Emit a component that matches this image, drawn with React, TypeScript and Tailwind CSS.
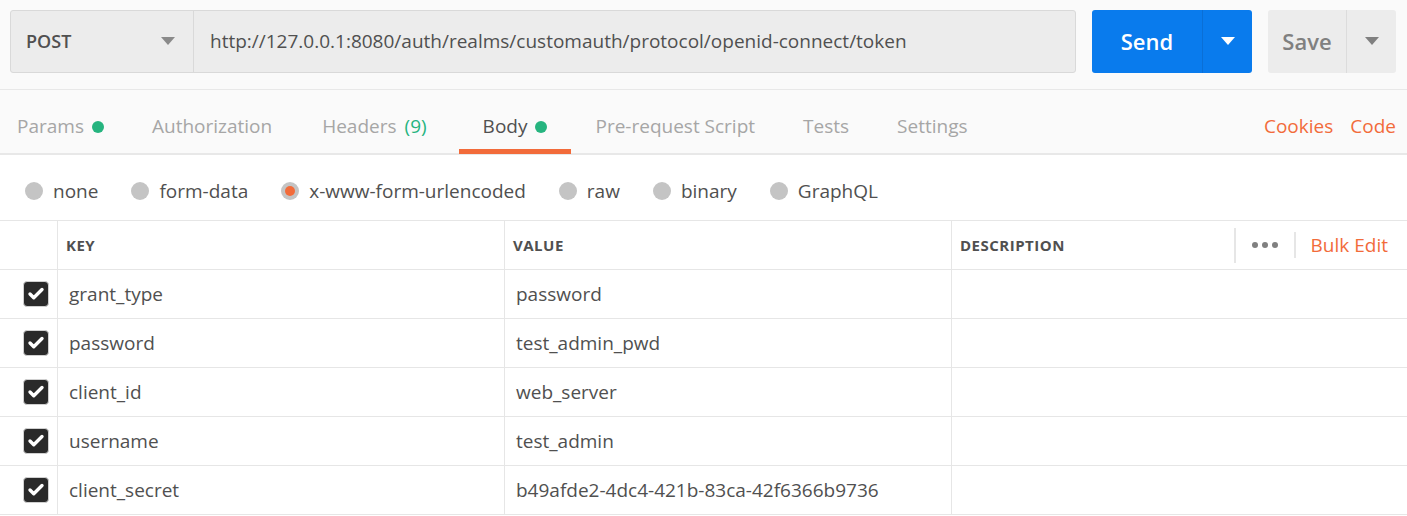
import { Check } from 'lucide-react'

const font = { fontFamily: '"Open Sans", "Noto Sans", sans-serif' }

const tabs: { label: string; dot?: boolean; count?: string; active?: boolean }[] = [
  { label: 'Params', dot: true },
  { label: 'Authorization' },
  { label: 'Headers', count: '(9)' },
  { label: 'Body', dot: true, active: true },
  { label: 'Pre-request Script' },
  { label: 'Tests' },
  { label: 'Settings' },
]

const bodyTypes = ['none', 'form-data', 'x-www-form-urlencoded', 'raw', 'binary', 'GraphQL']

const rows = [
  { key: 'grant_type', value: 'password' },
  { key: 'password', value: 'test_admin_pwd' },
  { key: 'client_id', value: 'web_server' },
  { key: 'username', value: 'test_admin' },
  { key: 'client_secret', value: 'b49afde2-4dc4-421b-83ca-42f6366b9736' },
]

function Caret({ className }: { className: string }) {
  return (
    <svg width="14" height="8" viewBox="0 0 14 8" className={className}>
      <path d="M0 0 L14 0 L7 8 Z" fill="currentColor" />
    </svg>
  )
}

export default function App() {
  return (
    <div className="w-[1407px] h-[516px] overflow-hidden bg-white text-[#505050]" style={font}>
      <div className="bg-[#fafafa]">
        <div className="flex items-center h-[90px] pl-[10px] pr-[11px] pb-[17px] pt-[10px] border-b border-[#e8e8e8]">
          <div className="flex flex-1 h-[63px] rounded-[3px] border border-[#d9d9d9] bg-[#ececec]">
            <div className="flex items-center justify-between w-[183px] pl-[15px] pr-[18px] border-r border-[#d9d9d9]">
              <span className="text-[18px] font-semibold text-[#505050]">POST</span>
              <Caret className="text-[#8a8a8a]" />
            </div>
            <div className="flex items-center pl-[16px] text-[19px] text-[#505050]">
              http://127.0.0.1:8080/auth/realms/customauth/protocol/openid-connect/token
            </div>
          </div>
          <div className="flex ml-[16px] h-[63px] w-[160px] rounded-[3px] bg-[#097bed] text-white">
            <div className="flex items-center justify-center w-[111px] border-r border-[#0a6fd6] text-[22px] font-semibold">
              Send
            </div>
            <div className="flex flex-1 items-center justify-center">
              <Caret className="text-white" />
            </div>
          </div>
          <div className="flex ml-[16px] h-[63px] w-[128px] rounded-[3px] bg-[#ececec] text-[#808080]">
            <div className="flex items-center justify-center w-[79px] border-r border-[#dcdcdc] text-[22px] font-semibold">
              Save
            </div>
            <div className="flex flex-1 items-center justify-center">
              <Caret className="text-[#808080]" />
            </div>
          </div>
        </div>

        <div className="flex items-stretch h-[65px] border-b-2 border-[#e8e8e8] pl-[17px] pr-[11px]">
          {tabs.map((t, i) => (
            <div
              key={t.label}
              className={`relative flex items-center pt-[10px] text-[19px] ${
                i === 0 ? 'pr-6' : t.count ? 'pl-[26px] pr-[32px]' : 'px-6'
              } ${t.active ? 'text-[#505050]' : 'text-[#a6a6a6]'}`}
            >
              {t.label}
              {t.count && <span className="ml-[8px] text-[#26b47f]">{t.count}</span>}
              {t.dot && <span className="ml-[8px] w-[12px] h-[12px] rounded-full bg-[#26b47f]" />}
              {t.active && <span className="absolute left-0 right-0 bottom-[-1px] h-[5px] bg-[#f26b3a]" />}
            </div>
          ))}
          <div className="flex flex-1 items-center justify-end gap-[17px] pt-[10px] text-[19px] text-[#f26b3a]">
            <span>Cookies</span>
            <span>Code</span>
          </div>
        </div>
      </div>

      <div className="flex items-center h-[65px] pt-[7px] pl-[25px] gap-[33px] text-[19px] text-[#505050]">
        {bodyTypes.map((b) => (
          <div key={b} className="flex items-center gap-[10px]">
            <span className="flex items-center justify-center w-[18px] h-[18px] rounded-full bg-[#c4c4c4]">
              {b === 'x-www-form-urlencoded' && <span className="w-[10px] h-[10px] rounded-full bg-[#f26b3a]" />}
            </span>
            <span>{b}</span>
          </div>
        ))}
      </div>

      <div className="border-t border-[#e6e6e6]">
        <div className="grid grid-cols-[58px_447px_447px_1fr] h-[49px] border-b border-[#e6e6e6] text-[15px] font-bold tracking-[0.5px] text-[#505050]">
          <div className="border-r border-[#e6e6e6]" />
          <div className="flex items-center pl-[8px] border-r border-[#e6e6e6]">KEY</div>
          <div className="flex items-center pl-[8px] border-r border-[#e6e6e6]">VALUE</div>
          <div className="flex items-center pl-[8px]">
            <span className="flex-1">DESCRIPTION</span>
            <span className="w-[2px] h-[35px] bg-[#e6e6e6]" />
            <span className="flex items-center gap-[4px] px-[16px]">
              <span className="w-[6px] h-[6px] rounded-full bg-[#808080]" />
              <span className="w-[6px] h-[6px] rounded-full bg-[#808080]" />
              <span className="w-[6px] h-[6px] rounded-full bg-[#808080]" />
            </span>
            <span className="w-[2px] h-[26px] bg-[#e6e6e6]" />
            <span className="pl-[15px] pr-[19px] text-[19px] font-normal tracking-normal text-[#f26b3a]">Bulk Edit</span>
          </div>
        </div>
        {rows.map((r) => (
          <div
            key={r.key}
            className="grid grid-cols-[58px_447px_447px_1fr] h-[49px] border-b border-[#e6e6e6] text-[19px] text-[#505050]"
          >
            <div className="flex items-center pl-[23px] border-r border-[#e6e6e6]">
              <span className="flex items-center justify-center w-[26px] h-[26px] rounded-[4px] bg-[#2a2a2a] border border-[#d0d0d0]">
                <Check className="w-[18px] h-[18px] text-white" strokeWidth={4.5} />
              </span>
            </div>
            <div className="flex items-center pl-[11px] border-r border-[#e6e6e6]">{r.key}</div>
            <div className="flex items-center pl-[11px] border-r border-[#e6e6e6]">{r.value}</div>
            <div />
          </div>
        ))}
      </div>
    </div>
  )
}
